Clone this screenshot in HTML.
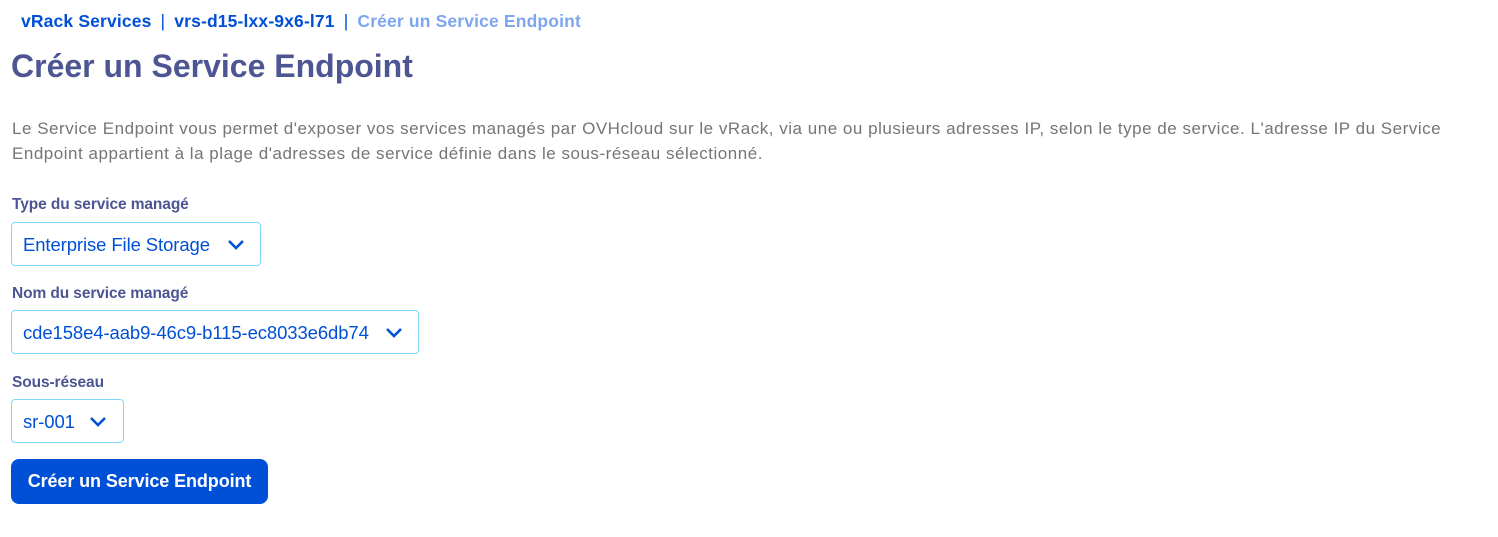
<!DOCTYPE html>
<html><head><meta charset="utf-8"><style>
body{margin:0;background:#fff;font-family:"Liberation Sans",sans-serif;width:1498px;height:537px;overflow:hidden;position:relative}
.a{position:absolute;white-space:nowrap}
.bc{top:11px;left:21px;font-size:17.5px;font-weight:bold;color:#0050d7;letter-spacing:0.15px}
.bc .s{font-weight:normal;margin:0 9px}
.bc .c{color:#7ea6ee}
h1{position:absolute;margin:0;top:48px;left:11px;font-size:32px;color:#4d5592;letter-spacing:0px}
.p{top:116px;left:12px;font-size:17px;line-height:25px;color:#757575;letter-spacing:0.52px}
.l{font-size:15.5px;font-weight:bold;color:#4d5592;left:12px;letter-spacing:-0.1px}
.sel{position:absolute;left:11px;border:1px solid #80d8fc;border-radius:4px;box-sizing:border-box;height:44px;color:#0050d7;font-size:18.5px;line-height:44px;padding-left:11px;letter-spacing:-0.1px;white-space:nowrap}
.sel svg{position:absolute;top:16px}
.btn{position:absolute;left:11px;top:459px;width:257px;height:45px;background:#0050d7;border-radius:8px;color:#fff;font-size:18px;font-weight:bold;text-align:center;line-height:45px;letter-spacing:-0.1px}
</style></head><body>
<div class="a bc">vRack Services<span class="s">|</span>vrs-d15-lxx-9x6-l71<span class="s">|</span><span class="c">Créer un Service Endpoint</span></div>
<h1>Créer un Service Endpoint</h1>
<div class="a p">Le Service Endpoint vous permet d'exposer vos services managés par OVHcloud sur le vRack, via une ou plusieurs adresses IP, selon le type de service. L'adresse IP du Service<br>Endpoint appartient à la plage d'adresses de service définie dans le sous-réseau sélectionné.</div>
<div class="a l" style="top:196px">Type du service managé</div>
<div class="sel" style="top:222px;width:250px">Enterprise File Storage<svg style="left:215px" width="18" height="12" viewBox="0 0 18 12"><path d="M2 2l7 7 7-7" fill="none" stroke="#0050d7" stroke-width="2.6"/></svg></div>
<div class="a l" style="top:285px">Nom du service managé</div>
<div class="sel" style="top:310px;width:408px">cde158e4-aab9-46c9-b115-ec8033e6db74<svg style="left:373px" width="18" height="12" viewBox="0 0 18 12"><path d="M2 2l7 7 7-7" fill="none" stroke="#0050d7" stroke-width="2.6"/></svg></div>
<div class="a l" style="top:374px">Sous-réseau</div>
<div class="sel" style="top:399px;width:113px">sr-001<svg style="left:77px" width="18" height="12" viewBox="0 0 18 12"><path d="M2 2l7 7 7-7" fill="none" stroke="#0050d7" stroke-width="2.6"/></svg></div>
<div class="btn">Créer un Service Endpoint</div>
</body></html>
